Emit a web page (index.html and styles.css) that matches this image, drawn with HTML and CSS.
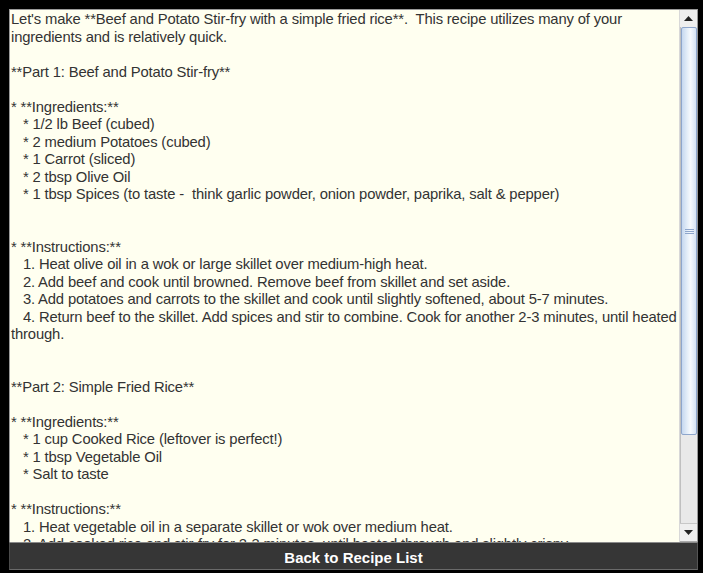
FILE: index.html
```html
<!DOCTYPE html>
<html>
<head>
<meta charset="utf-8">
<link rel="stylesheet" href="styles.css">
</head>
<body>
<div class="app">
  <div class="pane">
    <div class="text">Let's make **Beef and Potato Stir-fry with a simple fried rice**.  This recipe utilizes many of your ingredients and is relatively quick.

**Part 1: Beef and Potato Stir-fry**

* **Ingredients:**
   * 1/2 lb Beef (cubed)
   * 2 medium Potatoes (cubed)
   * 1 Carrot (sliced)
   * 2 tbsp Olive Oil
   * 1 tbsp Spices (to taste -  think garlic powder, onion powder, paprika, salt &amp; pepper)


* **Instructions:**
   1. Heat olive oil in a wok or large skillet over medium-high heat.
   2. Add beef and cook until browned. Remove beef from skillet and set aside.
   3. Add potatoes and carrots to the skillet and cook until slightly softened, about 5-7 minutes.
   4. Return beef to the skillet. Add spices and stir to combine. Cook for another 2-3 minutes, until heated through.


**Part 2: Simple Fried Rice**

* **Ingredients:**
   * 1 cup Cooked Rice (leftover is perfect!)
   * 1 tbsp Vegetable Oil
   * Salt to taste

* **Instructions:**
   1. Heat vegetable oil in a separate skillet or wok over medium heat.
   2. Add cooked rice and stir-fry for 2-3 minutes, until heated through and slightly crispy.
   3. Season with salt to taste.</div>
    <div class="scrollbar">
      <div class="arrow up"><svg width="9" height="5" viewBox="0 0 9 5"><polygon points="0,5 9,5 4.5,0" fill="#222"/></svg></div>
      <div class="track">
        <div class="thumb"><div class="grip"><span></span><span></span><span></span></div></div>
      </div>
      <div class="arrow down"><svg width="9" height="5" viewBox="0 0 9 5"><polygon points="0,0 9,0 4.5,5" fill="#222"/></svg></div>
    </div>
  </div>
  <div class="bar">Back to Recipe List</div>
</div>
</body>
</html>
```
FILE: styles.css
```css
html, body {
  margin: 0;
  padding: 0;
  background: #000;
}
body {
  width: 703px;
  height: 573px;
  overflow: hidden;
}
.app {
  padding: 9px 0 0 9px;
  width: 689px;
  display: flex;
  flex-direction: column;
}
.pane {
  display: flex;
  height: 533px;
  border: 1px solid #9a9a9a;
  border-bottom: none;
  background: #fffff0;
  box-sizing: border-box;
}
.text {
  flex: 1;
  overflow: hidden;
  white-space: pre-wrap;
  font-family: "Liberation Sans", Arial, sans-serif;
  font-size: 14.8px;
  line-height: 17.5px;
  letter-spacing: -0.15px;
  color: #333;
  padding: 1px 0 0 1px;
}
.scrollbar {
  width: 17px;
  display: flex;
  flex-direction: column;
  background: #ececec;
  border-left: 1px solid #d8d8d8;
}
.arrow {
  height: 17px;
  display: flex;
  align-items: center;
  justify-content: center;
  background: #efefef;
}
.arrow.down {
  border-top: 1px solid #c8c8c8;
  border-bottom: 1px solid #aaa;
}
.track {
  flex: 1;
  display: flex;
  flex-direction: column;
  background: #e9e9e9;
  border-left: 1px solid #c0c0c0;
}
.thumb {
  height: 408px;
  box-sizing: border-box;
  border: 1px solid #8ea6cc;
  border-radius: 2px;
  background: linear-gradient(to right, #c6d8ef 0%, #e6eff9 40%, #f6f9fd 60%, #d6e3f4 100%);
  display: flex;
  align-items: center;
  justify-content: center;
}
.grip {
  display: flex;
  flex-direction: column;
  gap: 1px;
}
.grip span {
  display: block;
  width: 9px;
  height: 1px;
  background: #8ea6cc;
}
.bar {
  height: 28px;
  box-sizing: border-box;
  padding-top: 2px;
  background: #363636;
  border-top: 1px solid #8a8a8a;
  border-bottom: 1px solid #6a6a6a;
  border-left: 1px solid #4a4a4a;
  border-right: 1px solid #555;
  color: #fff;
  font-family: "Liberation Sans", Arial, sans-serif;
  font-weight: bold;
  font-size: 15px;
  display: flex;
  align-items: center;
  justify-content: center;
}
```
